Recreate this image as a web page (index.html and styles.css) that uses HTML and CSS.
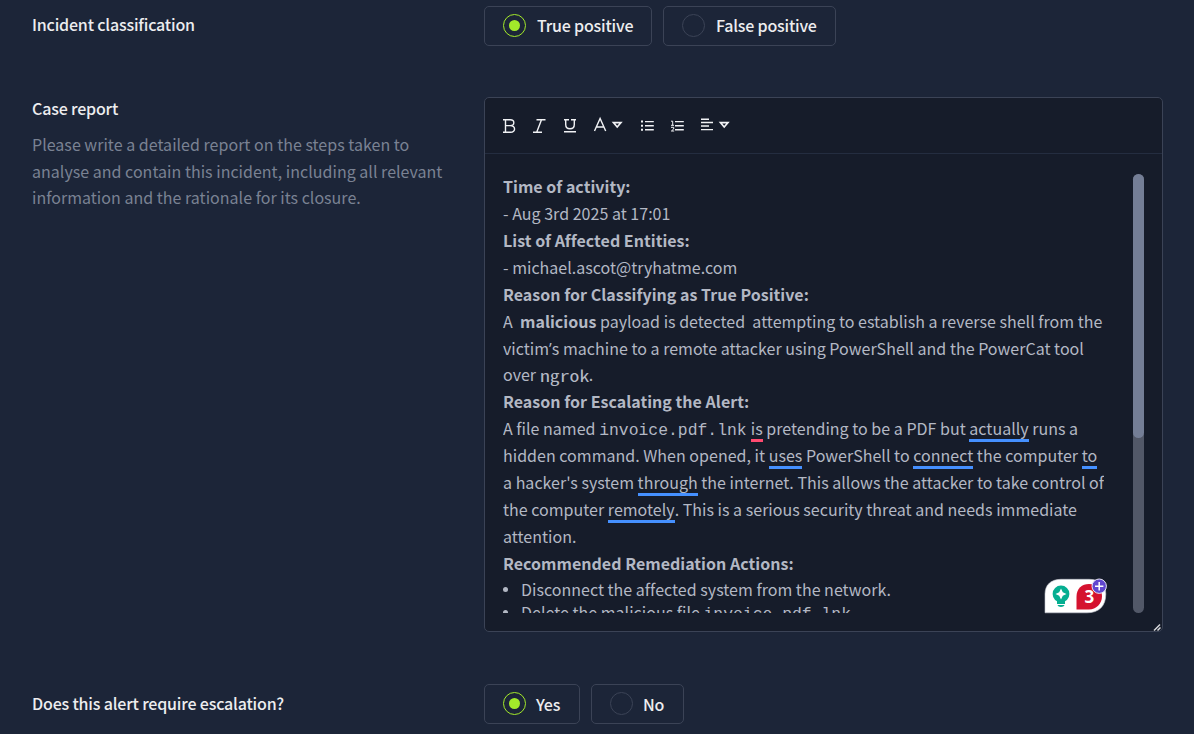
FILE: index.html
```html
<!DOCTYPE html>
<html lang="en">
<head>
<meta charset="utf-8">
<title>Case report</title>
<link rel="stylesheet" href="styles.css">
</head>
<body>
<main class="form">
  <section class="row row-classification">
    <div class="label">Incident classification</div>
    <div class="options">
      <div class="option option-true"><span class="radio radio-on"></span><span class="option-text">True positive</span></div>
      <div class="option option-false"><span class="radio"></span><span class="option-text">False positive</span></div>
    </div>
  </section>

  <section class="row row-report">
    <div class="label-col">
      <div class="label">Case report</div>
      <p class="hint">Please write a detailed report on the steps taken to<br>analyse and contain this incident, including all relevant<br>information and the rationale for its closure.</p>
    </div>
    <div class="editor">
      <svg class="toolbar" width="677" height="55" viewBox="0 0 677 55" fill="none" stroke="#f1f2f5" stroke-width="1.4">
        <path d="M18 21.7H25.3C30 21.7 30 27.6 25.3 27.6H20.5M25 27.6C31 27.6 31 34.3 25.5 34.3H18M20.5 21.7V34.3"/>
        <path d="M51.5 21.7H60.5M48 34.3H57M56.5 21.7L51.7 34.3"/>
        <path d="M79 21.7H84M86 21.7H91M80.7 21.7V26.5C80.7 32.2 89.3 32.2 89.3 26.5V21.7M79 33.7H91"/>
        <path d="M109.5 33L115.1 20.4L120.7 33M111.2 29H119"/>
        <path d="M128.4 24.6H136L132.2 29Z" stroke-width="1.6"/>
        <path d="M160 23.6H168.8M160 27.7H168.8M160 31.8H168.8"/>
        <path d="M156 23.6H158M156 27.7H158M156 31.8H158" stroke-width="2"/>
        <path d="M190 23.6H198.8M190 27.7H198.8M190 31.8H198.8"/>
        <path d="M186 23.2H187.7V27.3M186 27.3H189M186 29.3H188.7V31L186.4 33H189.2" stroke-width="1"/>
        <path d="M216 21.2H224M216 24.5H228M216 28H224M216 31.6H228"/>
        <path d="M235.4 24.6H243L239.2 29Z" stroke-width="1.6"/>
      </svg>
      <div class="editor-body">
        <div class="content">
          <div class="lines">
            <div class="line"><b>Time of activity:</b></div>
            <div class="line">- Aug 3rd 2025 at 17:01</div>
            <div class="line"><b>List of Affected Entities:</b></div>
            <div class="line">- michael.ascot@tryhatme.com</div>
            <div class="line"><b>Reason for Classifying as True Positive:</b></div>
            <div class="line">A&nbsp; <b>malicious</b> payload is detected&nbsp; attempting to establish a reverse shell from the</div>
            <div class="line">victim<span class="apostrophe">’</span>s machine to a remote attacker using PowerShell and the PowerCat tool</div>
            <div class="line">over <code class="code-host">ngrok</code>.</div>
            <div class="line"><b>Reason for Escalating the Alert:</b></div>
            <div class="line">A file named <code class="code-file">invoice.pdf.lnk</code> <span class="mark mark-red">is</span> pretending to be a PDF but <span class="mark">actually</span> runs a</div>
            <div class="line">hidden command. When opened, it <span class="mark">uses</span> PowerShell to <span class="mark">connect</span> the computer <span class="mark">to</span></div>
            <div class="line">a hacker's system <span class="mark">through</span> the internet. This allows the attacker to take control of</div>
            <div class="line">the computer <span class="mark">remotely</span>. This is a serious security threat and needs immediate</div>
            <div class="line">attention.</div>
            <div class="line"><b>Recommended Remediation Actions:</b></div>
          </div>
          <div class="item"><span>Disconnect the affected system from the network.</span></div>
          <div class="item"><span>Delete the malicious file <code class="code-file">invoice.pdf.lnk</code>.</span></div>
        </div>
        <div class="scrollbar"><div class="thumb"></div></div>
      </div>
      <svg class="assistant" width="66" height="38" viewBox="0 0 66 38">
        <path d="M2 36.800V18C2 9 8 3.300 18 3.300H46C57 3.300 62.800 9 62.800 18C62.800 30 56 36.800 44 36.800Z" fill="#fff" stroke="#c5c8d0" stroke-width=".6"/>
        <circle cx="18" cy="18" r="8.400" fill="#05ae91"/>
        <path d="M14 25H22V28H14ZM14.500 29H21.500C21 31.500 15 31.500 14.500 29Z" fill="#05ae91"/>
        <path d="M18 12.500L19.800 16.200L23.500 18L19.800 19.800L18 23.500L16.200 19.800L12.500 18L16.200 16.200Z" fill="#fff"/>
        <path d="M33.500 33.500V21C33.500 12 39 8 46 8C54 8 59 13 59 20C59 28 53 33.500 46 33.500Z" fill="#d5122f"/>
        <text x="46.300" y="26.500" class="count">3</text>
        <circle cx="56.200" cy="10.200" r="7.200" fill="#6046cf" stroke="#e8e7f5"/>
        <path d="M52 10.200H60.400M56.200 6V14.400" stroke="#fff" stroke-width="1.500"/>
      </svg>
      <svg class="grip" width="8" height="8" viewBox="0 0 8 8"><path d="M1 7.500L7 1.500M4.500 7.500L7.500 4.500" stroke="#d6d7da" stroke-width="1.500"/></svg>
    </div>
  </section>

  <section class="row row-escalation">
    <div class="label">Does this alert require escalation?</div>
    <div class="options">
      <div class="option option-yes"><span class="radio radio-on"></span><span class="option-text">Yes</span></div>
      <div class="option option-no"><span class="radio"></span><span class="option-text">No</span></div>
    </div>
  </section>
</main>
</body>
</html>
```

FILE: styles.css
```css
* { box-sizing: border-box; }
body {
  margin: 0;
  height: 734px;
  overflow: hidden;
  background: #1c2538;
  color: #ededef;
  font: 16px/27px "Noto Sans CJK SC", "Noto Sans", sans-serif;
}
.form { padding: 6px 31px 0 32px; }
.row { display: grid; grid-template-columns: 452px 679px; }
.row-classification { height: 91px; }
.row-report { height: 587px; }
.label { font-weight: 500; letter-spacing: -0.180px; line-height: 24px; padding-top: 6px; }
.row-report .label { margin-top: -1px; padding-top: 0; }
.row-escalation .label { padding-top: 7px; }
.hint { margin: 11px 0 0; color: #7a8293; letter-spacing: 0.020px; line-height: 26.600px; white-space: nowrap; }
.options { display: flex; gap: 11px; height: 40px; }
.option {
  display: flex;
  align-items: center;
  gap: 11px;
  padding-left: 18px;
  border: 1px solid #3b4356;
  border-radius: 5px;
  font-weight: 500;
  letter-spacing: -0.200px;
  white-space: nowrap;
}
.row-classification .option-text { padding-bottom: 2px; }
.option-true { width: 168px; }
.option-false { width: 173px; }
.option-yes { width: 96px; }
.option-no { width: 93px; }
.radio {
  display: grid;
  place-items: center;
  flex: none;
  width: 23px;
  height: 23px;
  border: 1px solid #3b4356;
  border-radius: 50%;
}
.row-classification .radio { margin-bottom: 1px; }
.row-escalation .radio { margin-bottom: 1px; }
.row-escalation .option { gap: 10px; }
.radio-on { border-color: #a3ea2a; }
.radio-on::after { content: ""; width: 11px; height: 11px; border-radius: 50%; background: #a3ea2a; }
.editor {
  position: relative;
  height: 535px;
  border: 1px solid #3b4356;
  border-radius: 5px;
  background: #161c2a;
}
.toolbar { display: block; }
.editor-body {
  display: flex;
  justify-content: space-between;
  height: 478px;
  padding: 20px 18px 18px;
  border-top: 1px solid #242d40;
}
.content { height: 439px; overflow: hidden; color: #b3b8c4; letter-spacing: 0.020px; white-space: nowrap; }
.lines { margin: -1px 0 1px; }
.line { height: 26.930px; line-height: 26.930px; }
code { display: inline-block; letter-spacing: 0; line-height: 1; }
.code-file { width: 148px; font: 16.400px/1 "Liberation Mono", monospace; }
.code-host {
  width: 40px;
  margin-right: 9px;
  font: 16px/1 "Noto Sans Mono CJK SC", monospace;
  transform: translateY(1px) scaleX(1.231);
  transform-origin: 0 50%;
}
.apostrophe { font-family: "Open Sans", sans-serif; line-height: 1; }
.mark { display: inline-block; height: 27px; line-height: 26.930px; border-bottom: 3px solid #4590ff; vertical-align: top; }
.mark-red { border-color: #ff4a70; }
.item { display: flex; align-items: center; gap: 13px; height: 23px; line-height: 23px; }
.item::before { content: ""; width: 5px; height: 5px; border-radius: 50%; background: #b3b8c4; }
.scrollbar { width: 11px; height: 439px; border-radius: 6px; background: #525868; }
.thumb { height: 264px; border-radius: 6px; background: #747e96; }
.assistant { position: absolute; left: 558px; top: 478px; }
.count { font: bold 17px "Open Sans", sans-serif; fill: #fff; text-anchor: middle; }
.grip { position: absolute; right: 1px; bottom: 0; }
```
